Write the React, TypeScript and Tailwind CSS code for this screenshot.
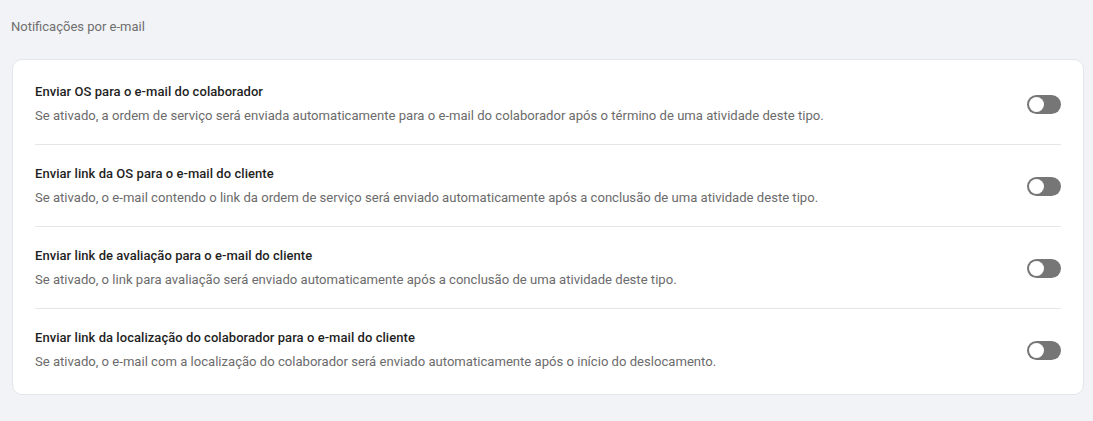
import { useState } from 'react';

type Setting = {
  id: string;
  title: string;
  description: string;
};

const settings: Setting[] = [
  {
    id: 'os-colaborador',
    title: 'Enviar OS para o e-mail do colaborador',
    description:
      'Se ativado, a ordem de serviço será enviada automaticamente para o e-mail do colaborador após o término de uma atividade deste tipo.',
  },
  {
    id: 'link-os-cliente',
    title: 'Enviar link da OS para o e-mail do cliente',
    description:
      'Se ativado, o e-mail contendo o link da ordem de serviço será enviado automaticamente após a conclusão de uma atividade deste tipo.',
  },
  {
    id: 'link-avaliacao',
    title: 'Enviar link de avaliação para o e-mail do cliente',
    description:
      'Se ativado, o link para avaliação será enviado automaticamente após a conclusão de uma atividade deste tipo.',
  },
  {
    id: 'link-localizacao',
    title: 'Enviar link da localização do colaborador para o e-mail do cliente',
    description:
      'Se ativado, o e-mail com a localização do colaborador será enviado automaticamente após o início do deslocamento.',
  },
];

function Toggle({ checked, onChange }: { checked: boolean; onChange: () => void }) {
  return (
    <button
      type="button"
      onClick={onChange}
      className={`relative flex h-[19px] w-[34px] shrink-0 items-center rounded-full px-[2px] ${
        checked ? 'bg-[#2563eb]' : 'bg-[#767676]'
      }`}
    >
      <span
        className={`h-[15px] w-[15px] rounded-full bg-white transition-transform ${
          checked ? 'translate-x-[15px]' : 'translate-x-0'
        }`}
      />
    </button>
  );
}

export default function App() {
  const [enabled, setEnabled] = useState<Record<string, boolean>>({});

  return (
    <div className="min-h-[421px] bg-[#f2f3f7] pl-3 pr-[9px] pt-[19px] pb-6 font-['Roboto',sans-serif]">
      <h2 className="-ml-px text-[13px] leading-[16px] text-[#6f6f6f]">Notificações por e-mail</h2>
      <div className="mt-6 rounded-[10px] border border-[#e2e5ec] bg-white px-[22px] pt-[3px] pb-[4px]">
        {settings.map((s, idx) => (
          <div
            key={s.id}
            className={`flex items-center justify-between pt-5 pb-[19px] ${
              idx < settings.length - 1 ? 'border-b border-[#e6e6e6]' : ''
            }`}
          >
            <div>
              <p className="text-[13px] font-medium leading-[18px] tracking-[0.05px] text-[#1f1f1f]">{s.title}</p>
              <p className="mt-[6px] text-[13.1px] leading-[18px] text-[#6b6b6b]">{s.description}</p>
            </div>
            <Toggle
              checked={!!enabled[s.id]}
              onChange={() => setEnabled((prev) => ({ ...prev, [s.id]: !prev[s.id] }))}
            />
          </div>
        ))}
      </div>
    </div>
  );
}
